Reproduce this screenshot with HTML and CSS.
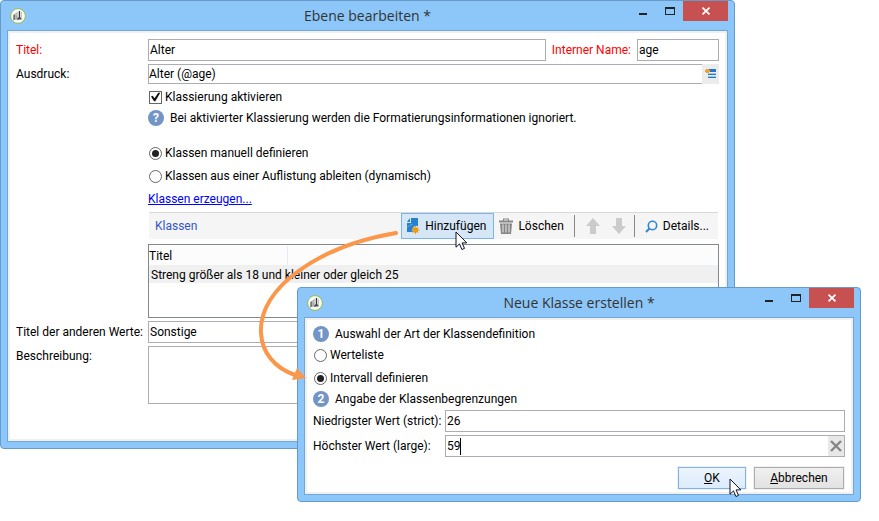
FILE: index.html
```html
<!DOCTYPE html>
<html lang="de">
<head>
<meta charset="utf-8">
<title>Ebene bearbeiten</title>
<link rel="stylesheet" href="styles.css">
</head>
<body>
<svg class="defs" aria-hidden="true">
  <symbol id="app-icon" viewBox="0 0 16 16">
    <circle cx="8" cy="8" r="7.4" fill="#fafbf8" stroke="#8fbc4a"/>
    <path d="M3.200 7 5.500 5.800v6l-2.300.5z" fill="#777c79"/>
    <path d="M5.500 5.200 7.800 4v2.200L5.500 7.200z" fill="#b0b4b1"/>
    <path d="M5.800 7.200h2v4.400h-2z" fill="#a5aaa7"/>
    <path d="M7.500 3.500h1v6h-1z" fill="#c6cac7"/>
    <path d="M9.500 3v6.500l-2 2" fill="none" stroke="#333" stroke-width="1.200"/>
    <path d="M8.500 9.500h3v2H8z" fill="#4a4e4a"/>
    <path d="M11.300 4v5" stroke="#b3b8b2" stroke-width="1"/>
  </symbol>
  <symbol id="pointer" viewBox="0 0 13 20">
    <path d="M1 1v15.200l3.500-3.300 2.400 5.600 2.600-1.100-2.400-5.500h4.700z" fill="#fff" stroke="#111122" stroke-width="1"/>
  </symbol>
</svg>

<main class="desktop">
  <section class="window window-level" aria-labelledby="level-title">
    <header class="titlebar">
      <svg class="app-icon" aria-hidden="true"><use href="#app-icon"/></svg>
      <h1 class="title" id="level-title">Ebene bearbeiten *</h1>
      <div class="controls">
        <button class="control" aria-label="Minimieren"><svg width="12" height="10"><path d="M2 7h8v2H2z" fill="#222"/></svg></button>
        <button class="control" aria-label="Maximieren"><svg width="12" height="10"><path d="M1 1h10v8H1zM2 3v5h8V3z" fill="#222" fill-rule="evenodd"/></svg></button>
        <button class="control close" aria-label="Schließen"><svg width="10" height="8"><path d="m1.5.7 7 6.6m0-6.6-7 6.6" stroke="#fff" stroke-width="1.8"/></svg></button>
      </div>
    </header>
    <form class="client">
      <div class="row">
        <label class="label required" for="f-title">Titel:</label>
        <input class="field" id="f-title" value="Alter">
        <label class="name-label required" for="f-name">Interner Name:</label>
        <input class="field name-field" id="f-name" value="age">
      </div>
      <div class="row">
        <label class="label" for="f-expr">Ausdruck:</label>
        <input class="field expression" id="f-expr" value="Alter (@age)">
        <button type="button" class="pick" aria-label="Ausdruck bearbeiten">
          <svg width="12" height="10"><path d="M4 0h7v3H4z" fill="#2478cc"/><path d="M3 5h8v1H3zM3 8h8v1H3z" fill="#2478cc"/><path d="M3 4h8v1H3zM3 7h8v1H3z" fill="#9cc5ea"/><path d="M1 0h3v1h1v2H4v1H1V3H0V1h1z" fill="#f0a030"/></svg>
        </button>
      </div>
      <div class="indent">
        <label class="option"><input type="checkbox" checked>Klassierung aktivieren</label>
        <p class="note info">
          <span class="badge">?</span>Bei aktivierter Klassierung werden die Formatierungsinformationen ignoriert.
        </p>
        <label class="option"><input type="radio" name="mode" checked>Klassen manuell definieren</label>
        <label class="option"><input type="radio" name="mode">Klassen aus einer Auflistung ableiten (dynamisch)</label>
        <div class="option"><a href="#klassen">Klassen erzeugen...</a></div>
        <div class="toolbar" id="klassen">
          <span class="toolbar-title">Klassen</span>
          <button type="button" class="tool active">
            <svg width="14" height="16"><path d="M5 0h7v8.200a4 4 0 0 0-5 5.800H1V5h4z" fill="#2680cf"/><path d="M1 4l3-4v4z" fill="#2680cf"/><path d="M1 9l6-3" stroke="#62a5df"/><circle cx="9.500" cy="12" r="2.800" fill="#f09a10"/><path d="M9.500 8v8M5.500 12h8M6.700 9.200l5.600 5.600M12.300 9.200l-5.600 5.600" stroke="#f09a10" stroke-width="1"/></svg>
            Hinzufügen
          </button>
          <button type="button" class="tool">
            <svg width="14" height="16"><path d="M0 2.500h14v2H0zM4 .5h6v2H9v-1H5v1H4zM1 5.500h12l-1 10.500H2z" fill="#858585"/><path d="M4 6.500v8M7 6.500v8M10 6.500v8" stroke="#f0f0f0"/></svg>
            Löschen
          </button>
          <span class="separator"></span>
          <button type="button" class="tool arrow" aria-label="Nach oben"><svg width="14" height="16"><path d="M7 0l7 8h-4v8H4V8H0z" fill="#cbcbcb"/></svg></button>
          <button type="button" class="tool arrow" aria-label="Nach unten"><svg width="14" height="16"><path d="M7 16l7-8h-4V0H4v8H0z" fill="#cbcbcb"/></svg></button>
          <span class="separator"></span>
          <button type="button" class="tool details">
            <svg width="13" height="13"><circle cx="7.500" cy="5.500" r="4.200" fill="none" stroke="#3186d0" stroke-width="1.600"/><path d="M4.500 8.500 1 12" stroke="#3186d0" stroke-width="2"/></svg>
            Details...
          </button>
        </div>
        <div class="list">
          <table>
            <thead><tr><th class="first">Titel</th><th></th></tr></thead>
            <tbody><tr><td colspan="2">Streng größer als 18 und kleiner oder gleich 25</td></tr></tbody>
          </table>
        </div>
      </div>
      <div class="row">
        <label class="label" for="f-other">Titel der anderen Werte:</label>
        <input class="field" id="f-other" value="Sonstige">
      </div>
      <div class="row row-top">
        <label class="label" for="f-desc">Beschreibung:</label>
        <textarea class="field area" id="f-desc"></textarea>
      </div>
    </form>
  </section>

  <section class="window window-class" aria-labelledby="class-title">
    <header class="titlebar">
      <svg class="app-icon" aria-hidden="true"><use href="#app-icon"/></svg>
      <h2 class="title" id="class-title">Neue Klasse erstellen *</h2>
      <div class="controls">
        <button class="control" aria-label="Minimieren"><svg width="12" height="10"><path d="M2 7h8v2H2z" fill="#222"/></svg></button>
        <button class="control" aria-label="Maximieren"><svg width="12" height="10"><path d="M1 1h10v8H1zM2 3v5h8V3z" fill="#222" fill-rule="evenodd"/></svg></button>
        <button class="control close" aria-label="Schließen"><svg width="10" height="8"><path d="m1.5.7 7 6.6m0-6.6-7 6.6" stroke="#fff" stroke-width="1.8"/></svg></button>
      </div>
    </header>
    <form class="client">
      <p class="note"><span class="badge">1</span>Auswahl der Art der Klassendefinition</p>
      <label class="option"><input type="radio" name="kind">Werteliste</label>
      <label class="option"><input type="radio" name="kind" checked>Intervall definieren</label>
      <p class="note"><span class="badge">2</span>Angabe der Klassenbegrenzungen</p>
      <div class="row">
        <label class="label" for="f-low">Niedrigster Wert (strict):</label>
        <input class="field" id="f-low" value="26">
      </div>
      <div class="row">
        <label class="label" for="f-high">Höchster Wert (large):</label>
        <div class="clearable">
          <input class="field" id="f-high" value="59">
          <span class="caret"></span>
          <button type="button" class="clear" aria-label="Leeren"><svg width="12" height="12"><path d="m1 1 10 10m0-10L1 11" stroke="#858585" stroke-width="2.400"/></svg></button>
        </div>
      </div>
      <div class="actions">
        <button type="button" class="push primary"><u>O</u>K</button>
        <button type="button" class="push cancel"><u>A</u>bbrechen</button>
      </div>
    </form>
  </section>

  <svg class="flow-arrow" viewBox="0 0 150 160" aria-hidden="true">
    <path d="M141 7C64 20 3 62 6 107c1 20 14 35 34 42" fill="none" stroke="#fa974b" stroke-width="4" stroke-linecap="round"/>
    <path d="M42 142l9 10-14 2z" fill="#fa974b"/>
  </svg>
  <svg class="pointer pointer-add" aria-hidden="true"><use href="#pointer"/></svg>
  <svg class="pointer pointer-ok" aria-hidden="true"><use href="#pointer"/></svg>
</main>
</body>
</html>
```
FILE: styles.css
```css
* { box-sizing: border-box; }

body {
  margin: 0;
  background: #fff;
  color: #000;
  font: 12px/16px Roboto, "Open Sans", sans-serif;
}

button, input, textarea { font: inherit; color: inherit; margin: 0; }
button { padding: 0; border: 0; background: none; }
h1, h2, p { margin: 0; font-weight: normal; }
.defs { position: absolute; width: 0; height: 0; }

.desktop { position: relative; min-height: 100vh; overflow: hidden; }

/* Windows */
.window {
  position: absolute;
  padding: 0 6px 6px;
  border: 1px solid #659bcb;
  border-radius: 4px;
  background: #8dc7fa;
}
.window-level { top: 0; left: 0; right: 144px; }
.window-class { top: 287px; left: 297px; right: 18px; }

.titlebar {
  display: grid;
  grid-template-columns: 116px 1fr 116px;
  align-items: center;
  height: 29px;
}
.app-icon { width: 16px; height: 16px; margin-left: 3px; }
.title { font-family: "Open Sans", sans-serif; font-size: 14px; line-height: 28px; text-align: center; color: #333; }
.controls { display: flex; align-self: start; justify-content: flex-end; }
.control {
  display: flex;
  align-items: center;
  justify-content: center;
  width: 27px;
  height: 20px;
}
.close { width: 45px; background: #c75050; }

.client {
  display: flex;
  flex-direction: column;
  gap: 3px;
  border: 1px solid #71a7d8;
  background: #fff;
  box-shadow: inset 0 0 0 2px #f0f0f0;
}
.window-level .client { padding: 8px 8px 37px; }
.window-class .client { padding: 8px 8px 5px; }

/* Form rows */
.row { display: flex; align-items: center; }
.row-top { align-items: flex-start; }
.row-top .label { padding-top: 2px; }
.label { flex: 0 0 132px; white-space: nowrap; }
.required { color: #f00; }
.field {
  flex: 1;
  min-width: 0;
  height: 22px;
  padding: 0 1px;
  border: 1px solid #abadb3;
  border-radius: 0;
  background: #fff;
  outline: 0;
}
.name-label { padding: 0 6px; white-space: nowrap; }
.name-field { flex: 0 0 82px; }
.expression { height: 20px; padding: 0; border-right: 0; }
.pick {
  display: flex;
  align-items: center;
  justify-content: center;
  width: 17px;
  height: 20px;
  background: #ececec;
}
.area { height: 58px; resize: none; }

.indent { display: flex; flex-direction: column; gap: 3px; margin-left: 132px; }
.option { display: flex; align-items: center; gap: 3px; height: 20px; }
.option a { color: #00f; }
.note { display: flex; align-items: center; gap: 6px; height: 16px; white-space: nowrap; }
.info { margin-bottom: 14px; }
.badge {
  width: 16px;
  height: 16px;
  border-radius: 8px;
  background: #7395c6;
  color: #fff;
  font-weight: bold;
  text-align: center;
}

.option input {
  display: grid;
  place-items: center;
  width: 13px;
  height: 13px;
  margin-left: 1px;
  border: 1px solid #666;
  background: #fff;
  appearance: none;
}
.option input[type="radio"] { border-radius: 7px; }
.option input[type="radio"]:checked::before {
  content: "";
  width: 7px;
  height: 7px;
  border-radius: 4px;
  background: #222;
}
.option input[type="checkbox"]:checked::before {
  content: "";
  width: 10px;
  height: 10px;
  background: #111;
  clip-path: polygon(5% 45%, 22% 38%, 40% 62%, 78% 8%, 98% 8%, 48% 92%, 35% 92%);
}

/* Class list */
.toolbar {
  display: flex;
  align-items: center;
  height: 27px;
  margin: 0 1px;
  padding: 0 9px 0 6px;
  border-top: 1px solid #d8d8d8;
  background: #f5f5f5;
}
.toolbar-title { margin-right: auto; color: #3355c8; }
.tool {
  display: flex;
  align-items: center;
  gap: 5px;
  height: 26px;
  padding: 0 5px;
  white-space: nowrap;
}
.active { border: 1px solid #7eb4ea; background: #d5e7f7; padding: 0 7px 0 4px; }
.arrow { padding: 0 6px; }
.details { padding: 0 0 0 5px; }
.separator { width: 1px; height: 22px; margin: 0 5px; background: #888; }
.arrow + .separator { margin-left: 2px; }

.list { height: 74px; margin-top: 2px; border: 1px solid #828790; padding-top: 1px; }
.list table { width: 100%; border-collapse: collapse; }
.list th {
  height: 19px;
  padding: 0;
  background: #fcfcfc;
  font-weight: normal;
  text-align: left;
}
.list .first { width: 138px; border-right: 1px solid #e3ebf8; }
.list td { height: 18px; padding: 2px 2px 0; background: #f0f0f0; }

/* Dialog */
.clearable {
  position: relative;
  display: flex;
  flex: 1;
  border: 1px solid #abadb3;
  height: 22px;
}
.clearable .field { height: 20px; border: 0; }
.caret { position: absolute; top: 2px; left: 14px; width: 1px; height: 17px; background: #000; }
.clear {
  display: flex;
  align-items: center;
  justify-content: center;
  width: 16px;
  background: #e8e8e8;
}
.actions { display: flex; justify-content: flex-end; gap: 8px; padding: 7px 1px 0 0; }
.push {
  width: 90px;
  height: 22px;
  border: 1px solid #acacac;
  background: linear-gradient(#f0f0f0, #e2e2e2);
  box-shadow: 0 0 0 1px #f0f0f0;
}
.primary { width: 68px; border-color: #7eb4ea; background: linear-gradient(#ecf4fc, #dcecfc); }

/* Overlays */
.flow-arrow { position: absolute; top: 226px; left: 255px; width: 150px; height: 160px; pointer-events: none; }
.pointer { position: absolute; width: 13px; height: 20px; pointer-events: none; }
.pointer-add { top: 231px; left: 455px; }
.pointer-ok { top: 478px; left: 729px; }
```
